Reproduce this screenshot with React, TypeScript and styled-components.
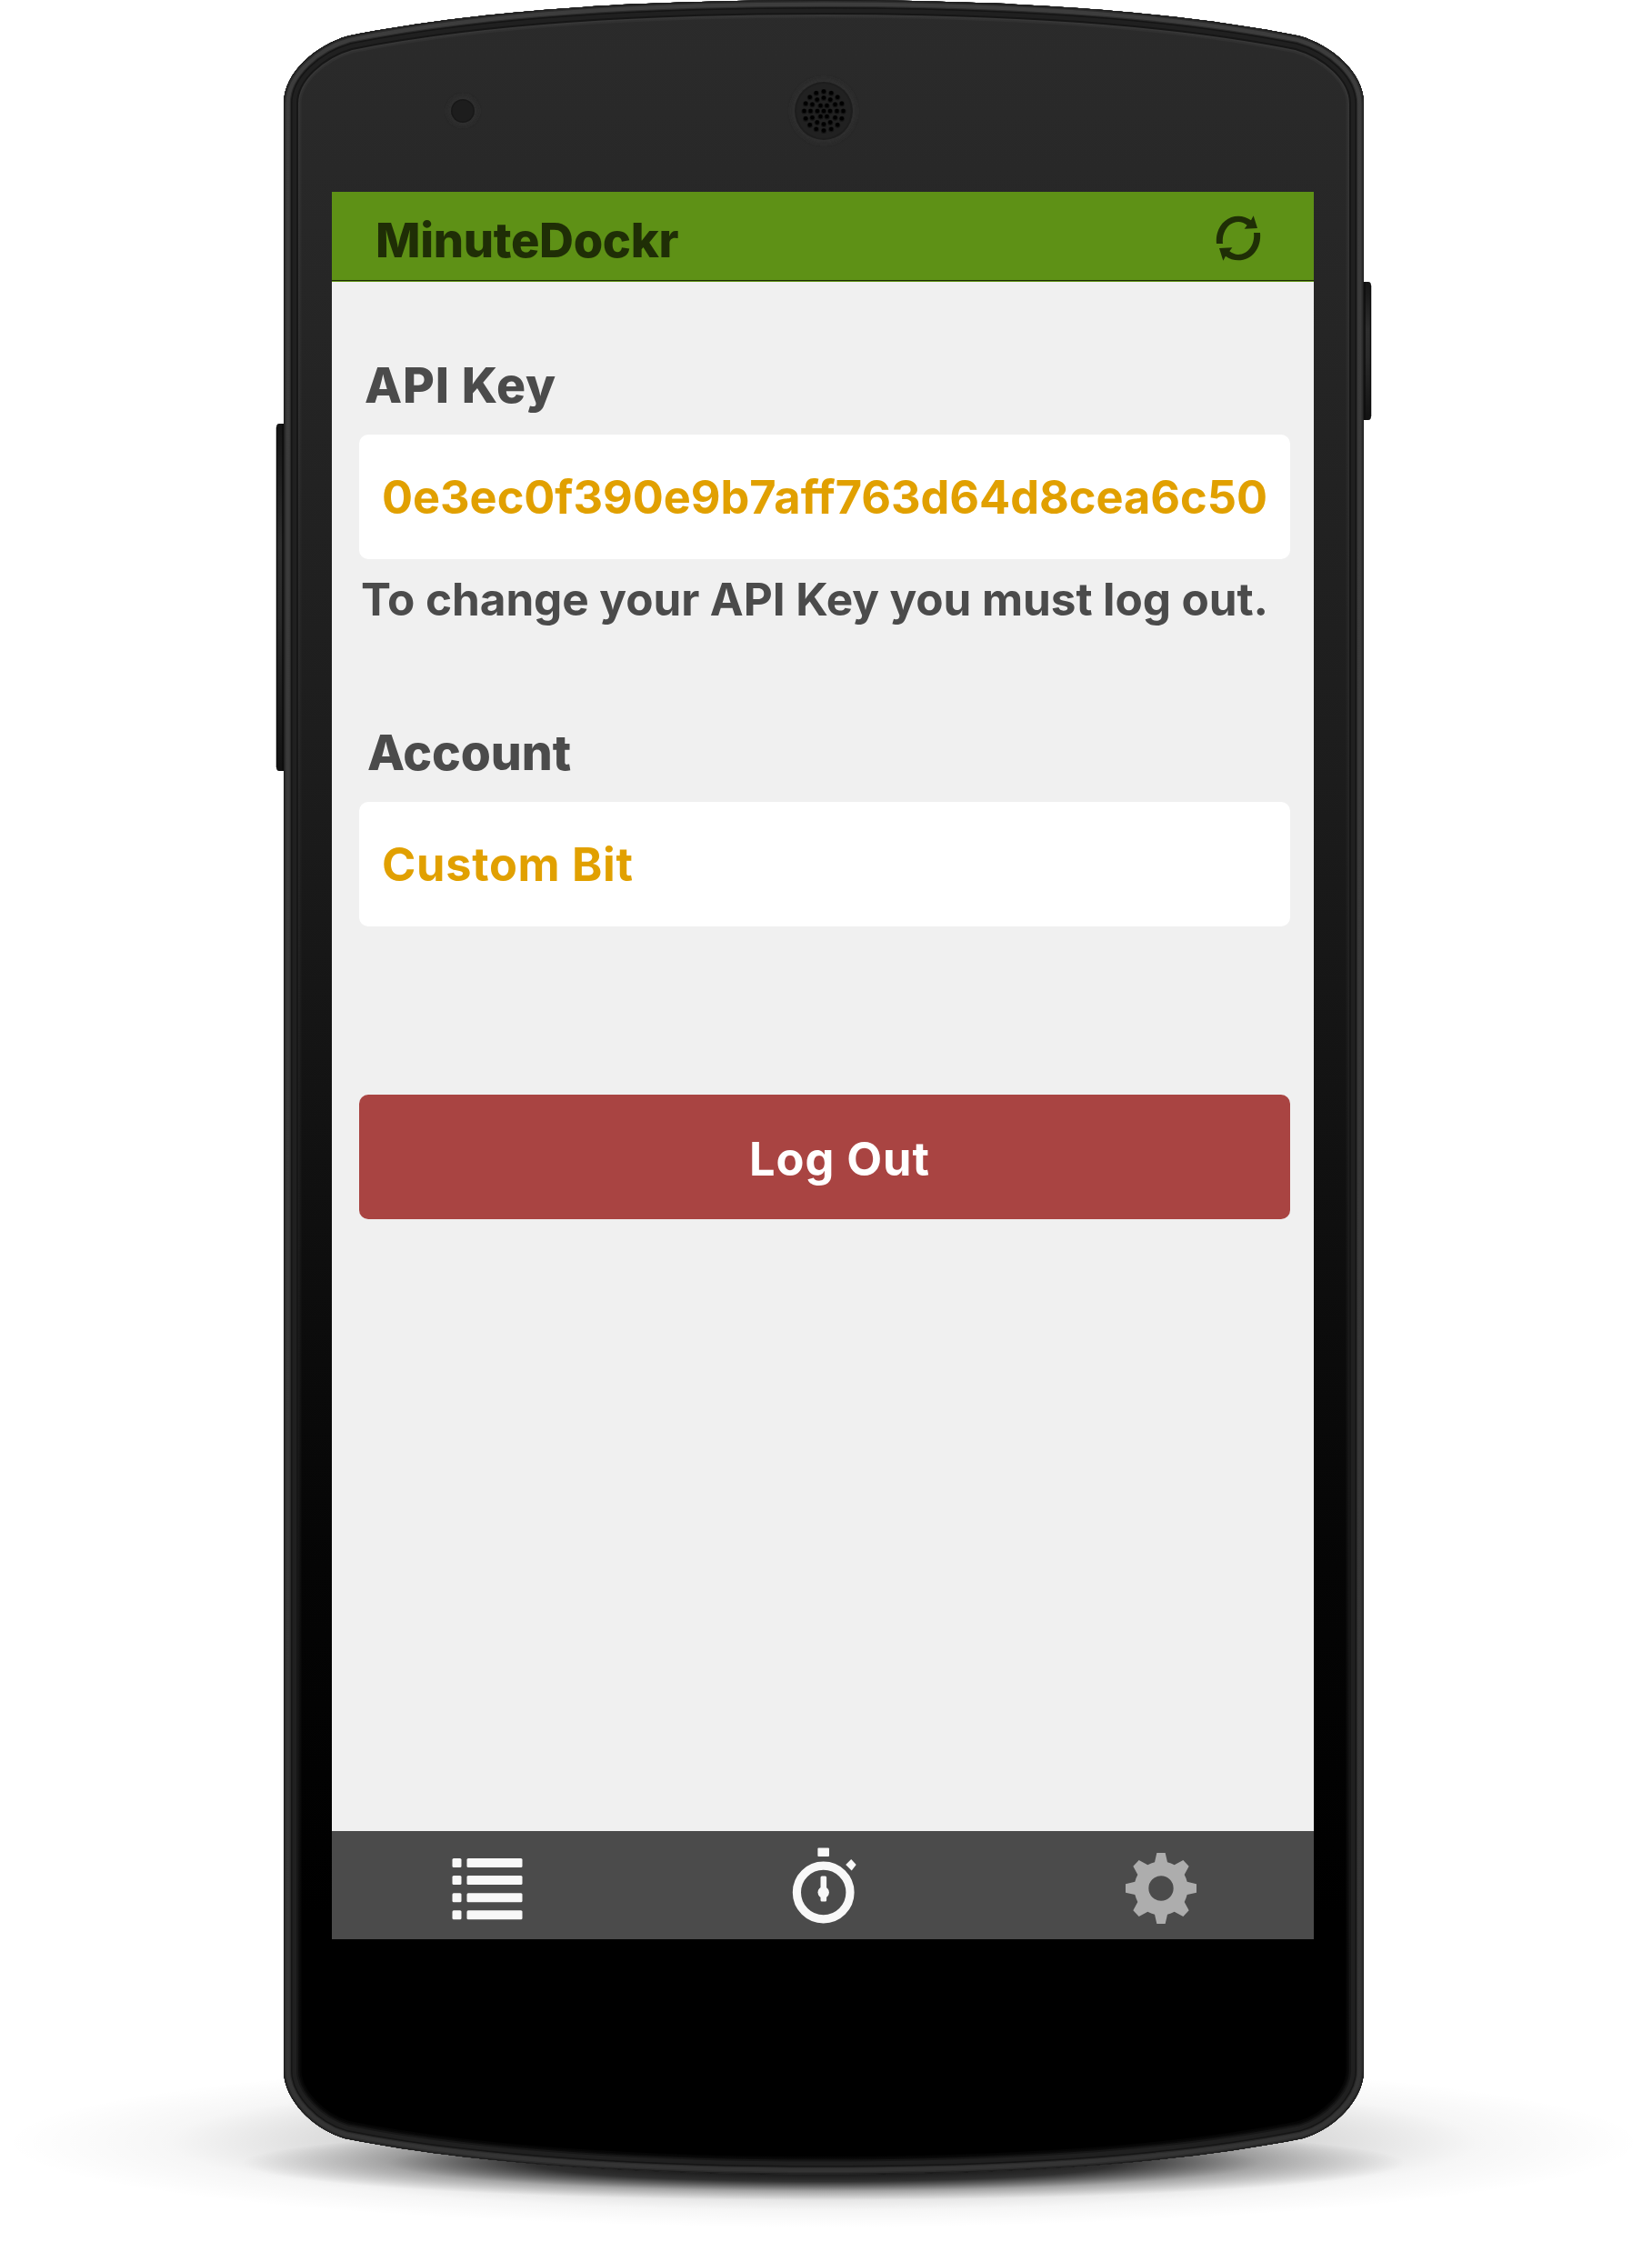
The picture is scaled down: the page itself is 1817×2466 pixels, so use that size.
import React from "react";
import styled, { createGlobalStyle } from "styled-components";

const GlobalStyle = createGlobalStyle`
  body { margin: 0; background: #fff; }
  * { box-sizing: border-box; }
`;

const Stage = styled.main`
  display: grid;
  width: 1817px;
  height: 2466px;
  overflow: hidden;
  font-family: Inter, "Liberation Sans", sans-serif;
`;

const DeviceArt = styled.svg`
  grid-area: 1 / 1;
  display: block;
`;

const Screen = styled.section`
  grid-area: 1 / 1;
  display: flex;
  flex-direction: column;
  width: 1080px;
  height: 1922px;
  margin: 211px 0 0 365px;
  background: #f0f0f0;
  z-index: 1;
`;

const Header = styled.header`
  display: flex;
  align-items: center;
  justify-content: space-between;
  height: 99px;
  padding: 6px 53px 0 48px;
  background: #5e9116;
  box-shadow: inset 0 -1px #5e9116, inset 0 -2px #1f2e06;
  color: #1f2e06;
`;

const Line = styled.span<{ $size: number; $weight: number; $track?: number }>`
  display: block;
  margin: 0;
  white-space: nowrap;
  font-size: ${(p) => p.$size}px;
  font-weight: ${(p) => p.$weight};
  letter-spacing: ${(p) => p.$track ?? 0}px;
  line-height: 60px;
`;

const Content = styled.div`
  flex: 1;
  display: flex;
  flex-direction: column;
  padding: 84px 26px 0 30px;
  color: #4b4b4b;
`;

const Field = styled.div<{ $indent: number }>`
  display: flex;
  flex-direction: column;
  gap: 24px;
  & > :first-child { padding-left: ${(p) => p.$indent}px; }
`;

const Value = styled.div`
  display: flex;
  align-items: center;
  height: 137px;
  padding-left: 25px;
  border-radius: 10px;
  background: #fff;
  color: #e1a000;
`;

const Hint = styled.div`
  margin: 14px 0 109px;
  padding-left: 2px;
`;

const LogOut = styled.button`
  display: flex;
  align-items: center;
  justify-content: center;
  height: 137px;
  margin: 185px 0 0;
  padding: 5px 0 0 33px;
  border: 0;
  border-radius: 10px;
  background: #a94442;
  color: #fff;
  font-family: inherit;
`;

const TabBar = styled.nav`
  display: flex;
  align-items: center;
  justify-content: space-between;
  height: 119px;
  padding: 0 128px 0 130.5px;
  background: #4b4b4b;
`;

const Icon = styled.svg`
  display: block;
  flex: none;
`;

const BODY =
  "M312 114 C312 79 348 49.500 383 39.500 C530 10 720 0 906 0 C1092 0 1282 10 1429 39.500 C1464 49.500 1500 79 1500 114 V2277 C1500 2310 1467 2342 1433 2352 C1282 2382 1092 2391.500 906 2391.500 C720 2391.500 530 2382 379 2352 C345 2342 312 2310 312 2277 Z";

const RINGS: [number, number][] = [
  [6, 7],
  [12, 14.5],
  [16, 21.5],
];

const grille = [
  [0, 0],
  ...RINGS.flatMap(([count, r]) =>
    Array.from({ length: count }, (_, i) => {
      const a = (i / count) * Math.PI * 2;
      return [Math.cos(a) * r, Math.sin(a) * r];
    })
  ),
];

function Device() {
  return (
    <DeviceArt width="1817" height="2466" viewBox="0 0 1817 2466">
      <defs>
        <linearGradient id="face" x1="0" y1="0" x2="0" y2="1">
          <stop offset="0" stopColor="#2b2b2b" />
          <stop offset=".13" stopColor="#262626" />
          <stop offset=".36" stopColor="#1c1c1c" />
          <stop offset=".72" stopColor="#050505" />
          <stop offset=".88" stopColor="#000" />
        </linearGradient>
        <linearGradient id="rim" x1="0" y1="0" x2="0" y2="1">
          <stop offset="0" stopColor="#3d3d3d" />
          <stop offset="1" stopColor="#343434" />
        </linearGradient>
        <linearGradient id="lip" x1="0" y1="0" x2="0" y2="1">
          <stop offset="0" stopColor="#383838" />
          <stop offset=".4" stopColor="#242424" />
          <stop offset="1" stopColor="#0a0a0a" />
        </linearGradient>
        <linearGradient id="key" x1="0" y1="0" x2="0" y2="1">
          <stop offset="0" stopColor="#151515" />
          <stop offset=".35" stopColor="#2e2e2e" />
          <stop offset=".55" stopColor="#2a2a2a" />
          <stop offset="1" stopColor="#121212" />
        </linearGradient>
        <radialGradient id="haze">
          <stop offset="0" stopColor="#000" stopOpacity=".55" />
          <stop offset=".35" stopColor="#000" stopOpacity=".33" />
          <stop offset=".6" stopColor="#000" stopOpacity=".14" />
          <stop offset=".8" stopColor="#000" stopOpacity=".035" />
          <stop offset="1" stopColor="#000" stopOpacity="0" />
        </radialGradient>
        <radialGradient id="contact">
          <stop offset="0" stopColor="#000" stopOpacity="1" />
          <stop offset=".5" stopColor="#000" stopOpacity=".75" />
          <stop offset=".75" stopColor="#000" stopOpacity=".25" />
          <stop offset="1" stopColor="#000" stopOpacity="0" />
        </radialGradient>
        <clipPath id="bodyClip"><path d={BODY} /></clipPath>
        <filter id="soft" x="-50%" y="-50%" width="200%" height="200%">
          <feGaussianBlur stdDeviation="3" />
        </filter>
      </defs>
      <ellipse cx="906" cy="2356" rx="900" ry="94" fill="url(#haze)" />
      <ellipse cx="906" cy="2379" rx="640" ry="41" fill="url(#contact)" />
      <path d="M313 466 H307 Q304 466 304 470 V844 Q304 848 307 848 H313 Z" fill="url(#key)" />
      <path d="M304.500 470 V844 M311 466 V848" stroke="#0c0c0c" strokeWidth="1.500" />
      <path d="M1499 310 H1505 Q1508 310 1508 314 V458 Q1508 462 1505 462 H1499 Z" fill="url(#key)" />
      <path d="M1507.500 314 V458 M1501 310 V462" stroke="#0c0c0c" strokeWidth="1.500" />
      <path d={BODY} fill="url(#face)" />
      <g clipPath="url(#bodyClip)" fill="none">
        <path d={BODY} stroke="url(#lip)" strokeOpacity=".5" strokeWidth="39" />
        <path d={BODY} stroke="url(#lip)" strokeWidth="35" />
        <path d={BODY} stroke="#161616" strokeWidth="32" />
        <path d={BODY} stroke="#202020" strokeWidth="28" />
        <path d={BODY} stroke="#151515" strokeWidth="19" />
        <path d={BODY} stroke="#2a2a2a" strokeWidth="16" />
        <path d={BODY} stroke="url(#rim)" strokeWidth="13.500" />
        <path d={BODY} stroke="#2c2c2c" strokeWidth="5" />
        <path d={BODY} stroke="#1d1d1d" strokeWidth="2" />
      </g>
      <circle cx="509" cy="122" r="15" fill="#303030" filter="url(#soft)" />
      <circle cx="509" cy="122" r="13" fill="#181818" />
      <circle cx="509" cy="122" r="11.500" fill="#1d1d1d" />
      <circle cx="906" cy="122" r="34" fill="#303030" filter="url(#soft)" />
      <circle cx="906" cy="122" r="32" fill="#1d1d1d" />
      <circle cx="906" cy="122" r="30" fill="#212121" />
      {grille.map(([x, y], i) => (
        <g key={i}>
          <circle cx={906 + x} cy={122.5 + y} r="3" fill="#141414" />
          <circle cx={906 + x} cy={122 + y} r="2.200" fill="#000" />
        </g>
      ))}
    </DeviceArt>
  );
}

const SYNC_ARM =
  "M-72 18 L-51 18 C-56 -20 -32 -54 0 -54 C11 -54 21 -49 29 -43 L20 -31 L63 -33 L50 -74 L42 -59 C30 -68 15 -73 0 -73 C-45 -73 -77 -32 -72 18 Z";

const GEAR =
  "M-14-117H14L21-86Q33-83 44-77L73-93L92-73L77-45Q83-34 86-22L117-14V14L86 21Q83 33 77 45L92 73L73 93L44 77Q33 83 21 86L14 117H-14L-21 86Q-33 83-44 77L-73 93L-92 73L-77 45Q-83 33-86 21L-117 14V-14L-86-22Q-83-34-77-45L-92-73L-73-93L-44-77Q-33-83-21-86Z M0-41A41 41 0 1 0 0 41A41 41 0 1 0 0-41Z";

export default function App() {
  return (
    <Stage>
      <GlobalStyle />
      <Device />
      <Screen>
        <Header>
          <Line as="h1" $size={52.5} $weight={800} $track={-0.35}>MinuteDockr</Line>
          <Icon width="60" height="60" viewBox="-90 -84 180 180" fill="#1f2e06">
            <path d={SYNC_ARM} />
            <path d={SYNC_ARM} transform="rotate(180)" />
          </Icon>
        </Header>
        <Content>
          <Field $indent={6}>
            <Line $size={53.5} $weight={800} $track={0.9}>API Key</Line>
            <Value>
              <Line $size={50.5} $weight={700} $track={-0.04}>0e3ec0f390e9b7aff763d64d8cea6c50</Line>
            </Value>
          </Field>
          <Hint>
            <Line $size={49.5} $weight={700} $track={-0.09}>To change your API Key you must log out.</Line>
          </Hint>
          <Field $indent={9}>
            <Line $size={53.5} $weight={800} $track={-0.1}>Account</Line>
            <Value>
              <Line $size={50.5} $weight={700} $track={0.7}>Custom Bit</Line>
            </Value>
          </Field>
          <LogOut>
            <Line $size={50.5} $weight={700} $track={0.95}>Log Out</Line>
          </LogOut>
        </Content>
        <TabBar>
          <Icon width="81" height="81" viewBox="0 0 81 81" fill="#f8f8f8">
            {[0, 1, 2, 3].map((i) => (
              <g key={i}>
                <rect x="1.500" y={11 + i * 19.1} width="10" height="10" rx="1.500" />
                <rect x="17.500" y={11 + i * 19.1} width="61" height="10" rx="1.500" />
              </g>
            ))}
          </Icon>
          <Icon width="80" height="100" viewBox="-38.700 -58.500 80 100" fill="#f8f8f8">
            <g transform="translate(0 -1)">
              <circle r="29.300" fill="none" stroke="#f8f8f8" strokeWidth="9.200" />
              <rect x="-6.300" y="-49" width="12.600" height="9.500" rx="1" />
              <path d="M30.500-36.500L36-30.500L31-24L24.500-30.500Z" />
              <rect x="-3.200" y="-18" width="6.600" height="28" rx="1.500" />
              <circle r="6.200" />
            </g>
          </Icon>
          <Icon width="80" height="86" viewBox="-120 -138 240 258" fill="#adadad">
            <path fillRule="evenodd" d={GEAR} />
          </Icon>
        </TabBar>
      </Screen>
    </Stage>
  );
}
